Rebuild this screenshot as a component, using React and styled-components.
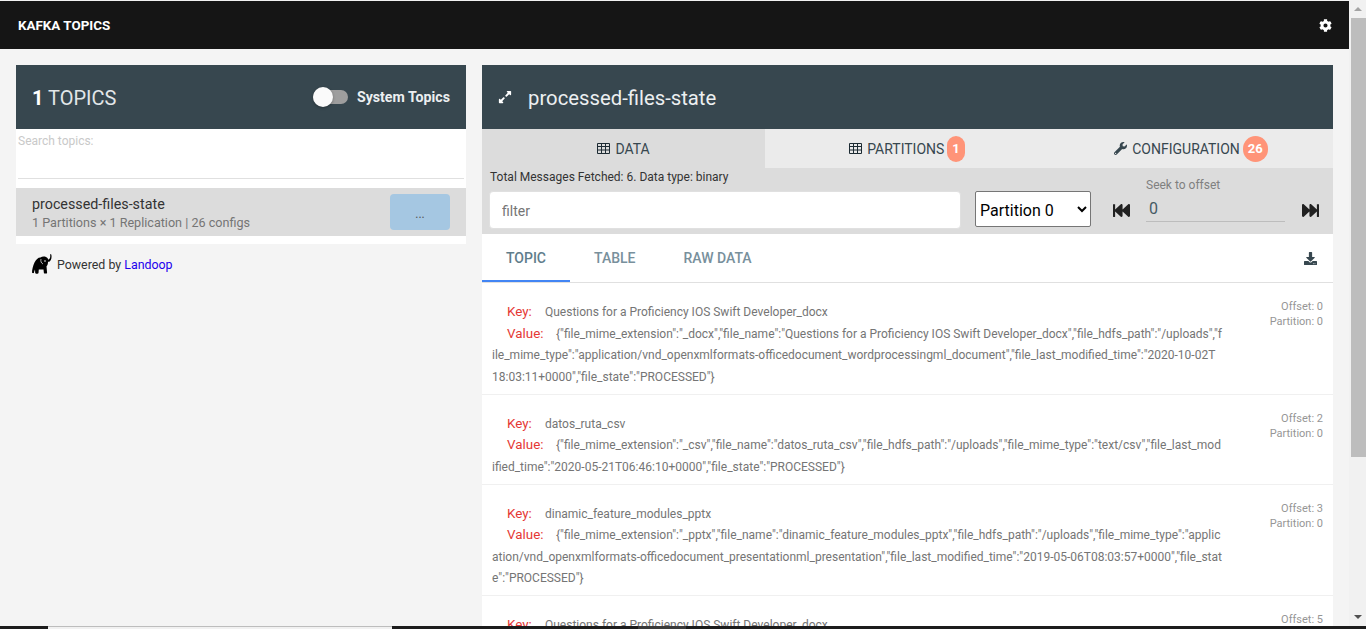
import React from "react"
import styled, { createGlobalStyle } from "styled-components"
import { FaCog, FaWrench, FaDownload, FaFastBackward, FaFastForward, FaExpandAlt } from "react-icons/fa"

const messages = [
  {
    key: "Questions for a Proficiency IOS Swift Developer_docx",
    value:
      '{"file_mime_extension":"_docx","file_name":"Questions for a Proficiency IOS Swift Developer_docx","file_hdfs_path":"/uploads","file_mime_type":"application/vnd_openxmlformats-officedocument_wordprocessingml_document","file_last_modified_time":"2020-10-02T18:03:11+0000","file_state":"PROCESSED"}',
    offset: 0,
  },
  {
    key: "datos_ruta_csv",
    value:
      '{"file_mime_extension":"_csv","file_name":"datos_ruta_csv","file_hdfs_path":"/uploads","file_mime_type":"text/csv","file_last_modified_time":"2020-05-21T06:46:10+0000","file_state":"PROCESSED"}',
    offset: 2,
  },
  {
    key: "dinamic_feature_modules_pptx",
    value:
      '{"file_mime_extension":"_pptx","file_name":"dinamic_feature_modules_pptx","file_hdfs_path":"/uploads","file_mime_type":"application/vnd_openxmlformats-officedocument_presentationml_presentation","file_last_modified_time":"2019-05-06T08:03:57+0000","file_state":"PROCESSED"}',
    offset: 3,
  },
  {
    key: "Questions for a Proficiency IOS Swift Developer_docx",
    value: '{"file_mime_extension":"_docx","file_name":"Questions for a Proficiency IOS Swift Developer_docx"}',
    offset: 5,
  },
]

const Elephant = () => (
  <svg width="20" height="21" viewBox="0 0 20 21" fill="#000">
    <path d="M19 0c.8 1.500.8 4-.2 6-.7 1.400-1.800 2-2.800 1.800 0 2-.5 3.600-1.500 4.500l.6 6.700c0 .8-3.200.8-3.200 0l-.4-3.500H6.800l-.3 3.500c0 .9-3.200.9-3.300 0L3 15.500c-.5 1-1.100 3-1.100 3.500-1 .4-1.900 0-1.900-.5 0-2.500 1-7 2.500-10C4 5.500 6 3.500 8.500 3.500c1.500-1 3.700-1.200 5.500-.4 1.200.5 1.900 1.500 2.300 2.600.7-.2 1.300-.8 1.700-1.700.3-1 .4-2.500.1-3.600z" />
    <path d="M9 5c-.5 2 0 4 2 5" fill="none" stroke="#f4f4f4" strokeWidth=".7" />
    <circle cx="13" cy="7" r=".8" fill="#f4f4f4" />
  </svg>
)

const TableIcon = () => (
  <svg width="13" height="11" viewBox="0 0 13 11" fill="none" stroke="#1d2b33">
    <path d="M.5.500h12v10H.500zM.5 3.500h12M.5 7h12M4.500.500v10M8.500.500v10" />
  </svg>
)

const App = () => (
  <Screen>
    <GlobalStyle />
    <Body>
      <Page>
        <TopBar>
          <Brand>KAFKA TOPICS</Brand>
          <FaCog size={13} />
        </TopBar>
        <Columns>
          <Sidebar>
            <SideCard>
              <DarkHeader>
                <TopicCount>
                  <b>1</b> TOPICS
                </TopicCount>
                <Toggle>
                  <ToggleTrack>
                    <ToggleKnob />
                  </ToggleTrack>
                  System Topics
                </Toggle>
              </DarkHeader>
              <SearchBox>
                <SearchLabel>Search topics:</SearchLabel>
              </SearchBox>
              <TopicRow>
                <TopicInfo>
                  <TopicName>processed-files-state</TopicName>
                  <TopicMeta>1 Partitions × 1 Replication | 26 configs</TopicMeta>
                </TopicInfo>
                <MoreButton>...</MoreButton>
              </TopicRow>
            </SideCard>
            <Powered>
              <Elephant />
              <span>
                Powered by <a href="#landoop">Landoop</a>
              </span>
            </Powered>
          </Sidebar>
          <Detail>
            <DetailHeader>
              <FaExpandAlt size={14} />
              <DetailTitle>processed-files-state</DetailTitle>
            </DetailHeader>
            <Tabs>
              <Tab $active>
                <TableIcon /> DATA
              </Tab>
              <Tab>
                <TableIcon /> PARTITIONS <Badge>1</Badge>
              </Tab>
              <Tab>
                <FaWrench size={13} /> CONFIGURATION <Badge>26</Badge>
              </Tab>
            </Tabs>
            <FilterPanel>
              <FetchInfo>Total Messages Fetched: 6. Data type: binary</FetchInfo>
              <FilterRow>
                <FilterInput placeholder="filter" readOnly />
                <PartitionSelect defaultValue="0">
                  <option value="0">Partition 0</option>
                </PartitionSelect>
                <SeekBack>
                  <FaFastBackward size={17} />
                </SeekBack>
                <Seek>
                  <SeekLabel>Seek to offset</SeekLabel>
                  <SeekValue>0</SeekValue>
                </Seek>
                <SeekForward>
                  <FaFastForward size={17} />
                </SeekForward>
              </FilterRow>
            </FilterPanel>
            <ViewTabs>
              <ViewTab $active>TOPIC</ViewTab>
              <ViewTab>TABLE</ViewTab>
              <ViewTab>RAW DATA</ViewTab>
              <DownloadIcon>
                <FaDownload size={13} />
              </DownloadIcon>
            </ViewTabs>
            {messages.map((m) => (
              <Message key={m.offset}>
                <MessageBody>
                  <KeyLine>
                    <Label>Key:</Label>
                    {m.key}
                  </KeyLine>
                  <ValueLine>
                    <ValueLabel>Value:</ValueLabel>
                    {m.value}
                  </ValueLine>
                </MessageBody>
                <MessageMeta>
                  <div>Offset: {m.offset}</div>
                  <div>Partition: 0</div>
                </MessageMeta>
              </Message>
            ))}
          </Detail>
        </Columns>
      </Page>
      <ScrollTrack>
        <ArrowUp />
        <ScrollThumb />
        <ArrowDown />
      </ScrollTrack>
    </Body>
    <BottomBar>
      <BottomGap />
      <BottomHighlight />
    </BottomBar>
  </Screen>
)

export default App

const GlobalStyle = createGlobalStyle`
  html, body {
    margin: 0;
    height: 100%;
    overflow: hidden;
    background: #f4f4f4;
    font-family: Roboto, "Liberation Sans", sans-serif;
  }
  * { box-sizing: border-box; }
`

const Screen = styled.div`
  height: 629px;
  display: flex;
  flex-direction: column;
  overflow: hidden;
  padding-top: 1px;
  background: #f1f1f1;
`

const Body = styled.div`
  flex: 1;
  min-height: 0;
  display: flex;
`

const Page = styled.div`
  width: 1349px;
  background: #f4f4f4;
  overflow: hidden;
`

const TopBar = styled.header`
  height: 48px;
  background: #151515;
  color: #fff;
  display: flex;
  align-items: center;
  justify-content: space-between;
  padding: 0 17px 0 18px;
`

const Brand = styled.div`
  font-size: 13.4px;
  font-weight: 700;
`

const Columns = styled.div`
  display: flex;
  gap: 16px;
  padding: 16px 16px 0;
`

const Sidebar = styled.aside`
  width: 450px;
  flex: none;
`

const SideCard = styled.section`
  background: #fff;
  padding-bottom: 8px;
`

const DarkHeader = styled.div`
  height: 64px;
  background: #37474f;
  color: #fff;
  display: flex;
  align-items: center;
  justify-content: space-between;
  padding: 0 16px;
`

const TopicCount = styled.div`
  font-size: 20px;
  font-weight: 400;
  color: #e2e6e8;
  margin-top: 2px;
  b {
    font-weight: 700;
    color: #fff;
  }
`

const Toggle = styled.div`
  display: flex;
  align-items: center;
  gap: 9px;
  font-size: 14.2px;
  font-weight: 700;
  color: #eceff1;
`

const ToggleTrack = styled.div`
  position: relative;
  width: 35px;
  height: 14px;
  border-radius: 7px;
  background: #9e9e9e;
`

const ToggleKnob = styled.div`
  position: absolute;
  left: 0;
  top: -3px;
  width: 20px;
  height: 20px;
  border-radius: 50%;
  background: #fafafa;
  box-shadow: 0 1px 3px rgba(0, 0, 0, 0.3);
`

const SearchBox = styled.div`
  height: 50px;
  margin: 0 2px;
  border-bottom: 1px solid #e0e0e0;
  padding-top: 5px;
`

const SearchLabel = styled.div`
  font-size: 12px;
  line-height: 14px;
  color: #c9c9c9;
`

const TopicRow = styled.div`
  margin-top: 9px;
  height: 48px;
  background: #dcdcdc;
  display: flex;
  align-items: center;
  justify-content: space-between;
  padding: 0 16px;
`

const TopicInfo = styled.div`
  padding-top: 2px;
`

const TopicName = styled.div`
  font-size: 14.3px;
  line-height: 16px;
  color: #333;
  margin-bottom: 4px;
`

const TopicMeta = styled.div`
  font-size: 12.6px;
  line-height: 14px;
  color: #757575;
`

const MoreButton = styled.div`
  width: 60px;
  height: 36px;
  border-radius: 4px;
  background: #a5c7e2;
  color: #555;
  font-size: 12px;
  padding-top: 4px;
  display: flex;
  align-items: center;
  justify-content: center;
`

const Powered = styled.div`
  display: flex;
  align-items: center;
  gap: 5px;
  padding: 10px 16px;
  font-size: 12.4px;
  color: #333;
  a {
    color: #2200ee;
    text-decoration: none;
  }
`

const Detail = styled.main`
  flex: 1;
  min-width: 0;
  background: #fff;
`

const DetailHeader = styled.div`
  height: 64px;
  background: #37474f;
  color: #fff;
  display: flex;
  align-items: center;
  gap: 16px;
  padding: 0 16px;
`

const DetailTitle = styled.div`
  font-size: 20.3px;
  color: #eceff1;
  margin-top: 2px;
`

const Tabs = styled.nav`
  display: grid;
  grid-template-columns: 283px 1fr 1fr;
  height: 39px;
  background: #ebebeb;
`

const Tab = styled.div`
  display: flex;
  align-items: center;
  justify-content: center;
  gap: 5px;
  font-size: 14px;
  color: #37474f;
  background: ${(p) => (p.$active ? "#dcdcdc" : "transparent")};
`

const Badge = styled.span`
  height: 26px;
  margin-left: -2px;
  padding: 0 5px;
  border-radius: 13px;
  background: #ff9478;
  color: #fff;
  font-size: 13px;
  font-weight: 700;
  display: flex;
  align-items: center;
  justify-content: center;
`

const FilterPanel = styled.div`
  height: 66px;
  background: #dcdcdc;
  padding: 2px 7px 0;
`

const FetchInfo = styled.div`
  font-size: 12px;
  line-height: 15px;
  color: #333;
  padding-left: 1px;
`

const FilterRow = styled.div`
  display: flex;
  align-items: center;
  margin-top: 6px;
`

const FilterInput = styled.input`
  width: 472px;
  height: 38px;
  border: 1px solid #e0e0e0;
  border-radius: 4px;
  background: #fff;
  padding: 2px 12px 0;
  font: 14px Roboto, sans-serif;
  &::placeholder {
    color: #757575;
  }
`

const PartitionSelect = styled.select`
  width: 116px;
  height: 36px;
  margin: 0 0 2px 14px;
  padding-top: 2px;
  background: #fff;
  border: 1px solid #767676;
  border-radius: 2px;
  font: 16px Roboto, sans-serif;
  color: #000;
`

const SeekBack = styled.span`
  display: flex;
  color: #212121;
  margin: 0 16px 0 22px;
`

const SeekForward = styled(SeekBack)`
  margin: 0 0 0 17px;
`

const Seek = styled.div`
  width: 139px;
  margin-top: -20px;
`

const SeekLabel = styled.div`
  font-size: 12px;
  line-height: 14px;
  color: #808080;
`

const SeekValue = styled.div`
  height: 27px;
  margin-top: 3px;
  border-bottom: 1px solid #bdbdbd;
  padding-left: 3px;
  font-size: 16px;
  line-height: 28px;
  color: #455a64;
`

const ViewTabs = styled.div`
  height: 49px;
  display: flex;
  align-items: stretch;
  border-bottom: 1px solid #e0e0e0;
`

const ViewTab = styled.div`
  display: flex;
  align-items: center;
  justify-content: center;
  width: ${(p) => (p.$active ? "88px" : "auto")};
  padding: ${(p) => (p.$active ? "0" : "0 24px")};
  font-size: 14px;
  font-weight: 500;
  color: ${(p) => (p.$active ? "#607d8b" : "#78909c")};
  box-shadow: ${(p) => (p.$active ? "inset 0 -2px 0 #4285f4" : "none")};
`

const DownloadIcon = styled.span`
  margin-left: auto;
  padding-right: 16px;
  display: flex;
  align-items: center;
  color: #37474f;
`

const Message = styled.article`
  display: flex;
  justify-content: space-between;
  padding: 19px 10px 5.5px 10px;
  border-bottom: 1px solid #f0f0f0;
`

const MessageBody = styled.div`
  width: 730px;
  font-size: 12px;
  line-height: 21.5px;
  color: #757575;
  word-break: break-all;
`

const Label = styled.span`
  display: inline-block;
  color: #e53935;
  font-size: 13.4px;
  line-height: 14px;
  margin-left: 15px;
  width: 38px;
`

const ValueLabel = styled(Label)`
  width: 49px;
`

const KeyLine = styled.div``

const ValueLine = styled.div``

const MessageMeta = styled.div`
  text-align: right;
  font-size: 11px;
  line-height: 15px;
  color: #969696;
  margin-top: -3px;
`

const ScrollTrack = styled.div`
  width: 17px;
  background: #f1f1f1;
  display: flex;
  flex-direction: column;
  align-items: center;
`

const ArrowUp = styled.div`
  margin: 6px 0 7px;
  border: 4px solid transparent;
  border-top: 0;
  border-bottom: 4px solid #a3a3a3;
`

const ScrollThumb = styled.div`
  align-self: flex-end;
  width: 15px;
  height: 439px;
  background: #bdbdbd;
`

const ArrowDown = styled.div`
  margin-top: auto;
  margin-bottom: 7px;
  border: 4px solid transparent;
  border-bottom: 0;
  border-top: 4px solid #505050;
`

const BottomBar = styled.div`
  height: 3px;
  flex: none;
  background: #1c1c1c;
  padding-left: 48px;
  display: flex;
`

const BottomGap = styled.div`
  width: 344px;
  height: 100%;
  background: #f1f1f1;
  border-top: 1px solid #bdbdbd;
`

const BottomHighlight = styled.div`
  width: 48px;
  margin-left: 246px;
  background: #3a3a3a;
`
